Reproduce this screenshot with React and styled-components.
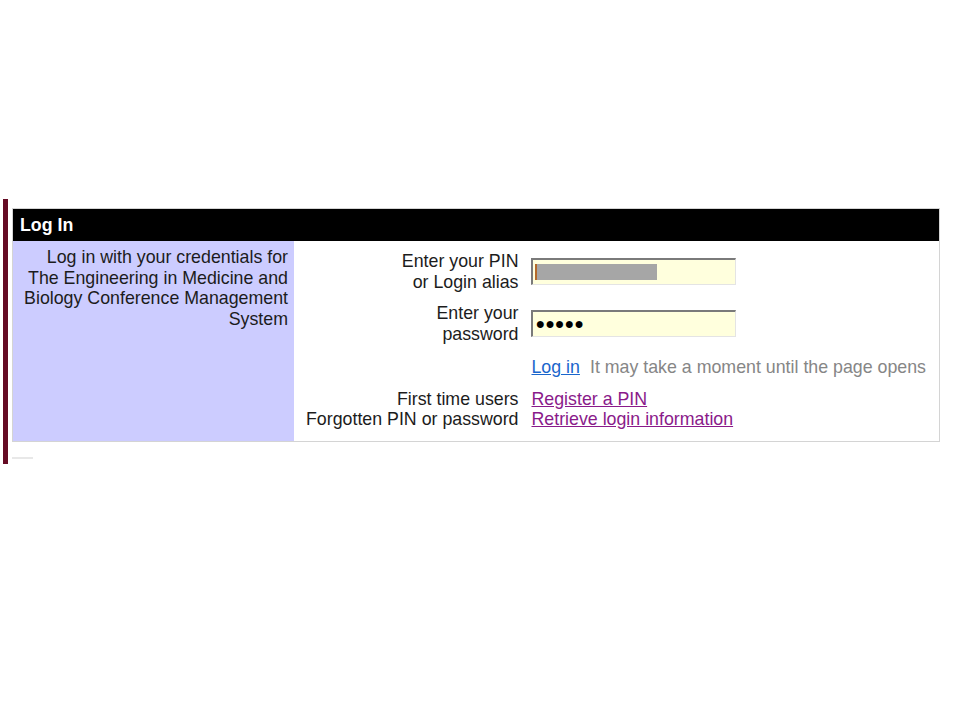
import styled, { createGlobalStyle } from 'styled-components'

const GlobalStyle = createGlobalStyle`
  body {
    margin: 0;
    background: #ffffff;
    font-family: "Liberation Sans", Arial, sans-serif;
  }
`

const Page = styled.div`
  padding-top: 199px;
`
const Frame = styled.div`
  margin-left: 3px;
  border-left: 5px solid #650b24;
  padding: 9px 0 5px 4px;
`
const Box = styled.div`
  display: grid;
  grid-template-columns: 281px 1fr;
  width: 926px;
  border: 1px solid #d4d4d4;
  font-size: 17.8px;
  line-height: 20.5px;
  color: #1c1c1c;
`
const Header = styled.div`
  grid-column: 1 / -1;
  display: flex;
  align-items: center;
  height: 32px;
  padding-left: 7px;
  background: #000000;
  color: #ffffff;
  font-weight: 700;
`
const Intro = styled.div`
  background: #ccccff;
  text-align: right;
  padding: 6px 6px 0 0;
`
const Form = styled.div`
  display: grid;
  grid-template-columns: auto 1fr;
  column-gap: 13px;
  row-gap: 11px;
  align-items: center;
  padding: 10px 0 11px 12px;
`
const Label = styled.div`
  text-align: right;
`
const Field = styled.div`
  display: flex;
  align-items: center;
  box-sizing: border-box;
  width: 205px;
  height: 27px;
  padding-left: 2px;
  background: #ffffdd;
  border-style: solid;
  border-width: 2px 1px 1px 2px;
  border-color: #7a7a7a #e4e4e4 #e4e4e4 #7a7a7a;
`
const Redacted = styled.span`
  display: block;
  width: 120px;
  height: 16px;
  background: #a6a6a6;
  border-left: 2px solid #b46a2a;
`
const Dots = styled.span`
  font-size: 16px;
  line-height: 1;
  color: #000000;
`
const Actions = styled.div`
  display: flex;
  gap: 10px;
  margin-top: 2px;
`
const Link = styled.a`
  color: ${(p) => (p.$visited ? '#8a1a8a' : '#1a66cc')};
  text-decoration: underline;
  cursor: pointer;
`
const Hint = styled.span`
  color: #868686;
`
const Stack = styled.div`
  display: flex;
  flex-direction: column;
  align-items: ${(p) => (p.$right ? 'flex-end' : 'flex-start')};
`
const Rule = styled.div`
  width: 21px;
  height: 2px;
  margin-top: 15px;
  background: #e8e8e8;
`

export default function App() {
  return (
    <Page>
      <GlobalStyle />
      <Frame>
        <Box>
          <Header>Log In</Header>
          <Intro>
            Log in with your credentials for The Engineering in Medicine and
            Biology Conference Management System
          </Intro>
          <Form>
            <Label>
              Enter your PIN
              <br />
              or Login alias
            </Label>
            <Field>
              <Redacted />
            </Field>
            <Label>
              Enter your
              <br />
              password
            </Label>
            <Field>
              <Dots>●●●●●</Dots>
            </Field>
            <span />
            <Actions>
              <Link>Log in</Link>
              <Hint>It may take a moment until the page opens</Hint>
            </Actions>
            <Stack $right>
              <span>First time users</span>
              <span>Forgotten PIN or password</span>
            </Stack>
            <Stack>
              <Link $visited>Register a PIN</Link>
              <Link $visited>Retrieve login information</Link>
            </Stack>
          </Form>
        </Box>
        <Rule />
      </Frame>
    </Page>
  )
}
